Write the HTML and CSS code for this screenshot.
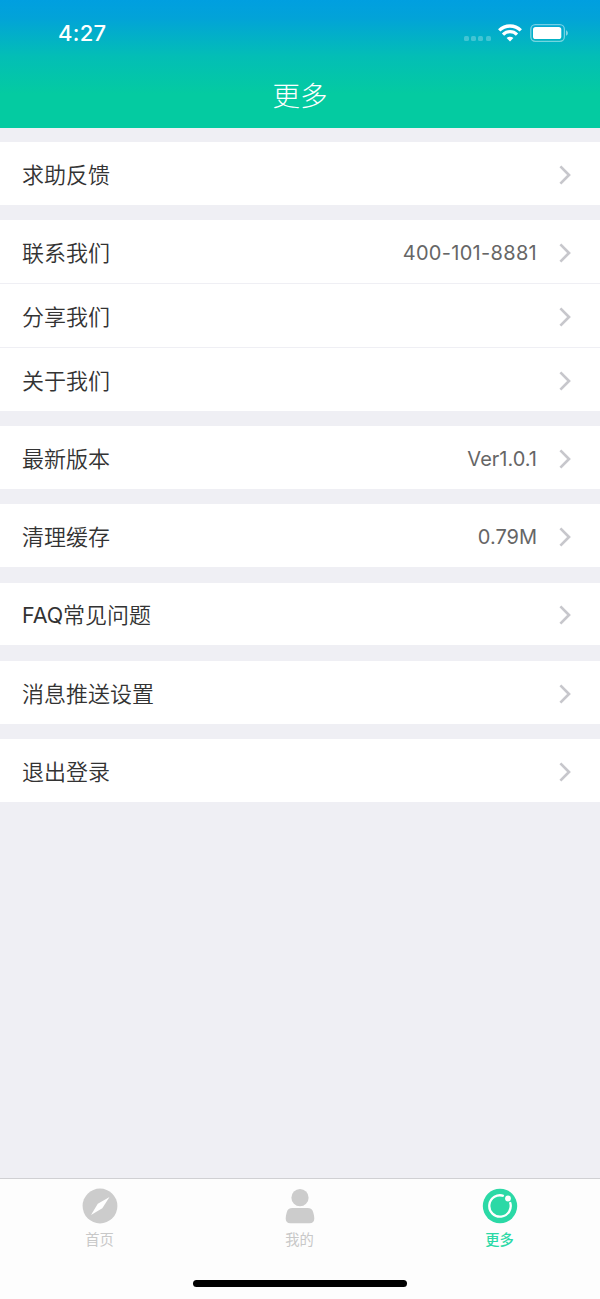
FILE: index.html
```html
<!DOCTYPE html>
<html lang="zh-CN">
<head>
<meta charset="utf-8">
<title>更多</title>
<link rel="stylesheet" href="styles.css">
</head>
<body>
<svg class="sprite" aria-hidden="true">
  <symbol id="chevron" viewBox="0 0 12 20"><path d="M1.4 1.4 10 10l-8.6 8.6" fill="none" stroke="#c7c7cc" stroke-width="2.7"/></symbol>
</svg>
<header class="header">
  <div class="status">
    <span class="time">4:27</span>
    <span class="signal"><i></i><i></i><i></i><i></i></span>
    <svg class="wifi" width="24" height="18" viewBox="0 0 24 18" fill="none" stroke="#fff">
      <path d="M1.2 6.4C7.2.5 16.8.5 22.8 6.4" stroke-width="3.3"/>
      <path d="M5 10.6c3.9-3.9 10.1-3.9 14 0" stroke-width="3.2"/>
      <path d="M8.6 14c1.9-1.7 4.9-1.7 6.8 0L12 17.5Z" fill="#fff" stroke="none"/>
    </svg>
    <svg class="battery" width="39" height="18" viewBox="0 0 39 18">
      <rect x=".8" y=".7" width="33.6" height="16.6" rx="4.5" fill="none" stroke="#fff" stroke-opacity=".45" stroke-width="1.3"/>
      <rect x="3" y="3" width="28.3" height="12" rx="2.6" fill="#fff"/>
      <path d="M36 6.2c2.5 1 2.5 4.6 0 5.6Z" fill="#fff" fill-opacity=".5"/>
    </svg>
  </div>
  <h1 class="title">更多</h1>
</header>
<main class="list">
  <section class="group">
    <div class="row"><span class="label">求助反馈</span><svg class="chevron"><use href="#chevron"/></svg></div>
  </section>
  <section class="group">
    <div class="row"><span class="label">联系我们</span><span class="value phone">400-101-8881</span><svg class="chevron"><use href="#chevron"/></svg></div>
    <div class="row"><span class="label">分享我们</span><svg class="chevron"><use href="#chevron"/></svg></div>
    <div class="row"><span class="label">关于我们</span><svg class="chevron"><use href="#chevron"/></svg></div>
  </section>
  <section class="group">
    <div class="row"><span class="label">最新版本</span><span class="value">Ver1.0.1</span><svg class="chevron"><use href="#chevron"/></svg></div>
  </section>
  <section class="group">
    <div class="row"><span class="label">清理缓存</span><span class="value">0.79M</span><svg class="chevron"><use href="#chevron"/></svg></div>
  </section>
  <section class="group">
    <div class="row"><span class="label"><span class="latin">FAQ</span>常见问题</span><svg class="chevron"><use href="#chevron"/></svg></div>
  </section>
  <section class="group">
    <div class="row"><span class="label">消息推送设置</span><svg class="chevron"><use href="#chevron"/></svg></div>
  </section>
  <section class="group">
    <div class="row"><span class="label">退出登录</span><svg class="chevron"><use href="#chevron"/></svg></div>
  </section>
</main>
<footer class="footer">
  <nav class="tabs">
    <a class="tab">
      <svg width="36" height="36" viewBox="0 0 36 36"><circle cx="18" cy="18" r="17.4" fill="#ccc"/><path d="M27.5 9 20.3 20.2 9 27 15.8 15.7Z" fill="#fff"/></svg>
      <span>首页</span>
    </a>
    <a class="tab">
      <svg width="36" height="36" viewBox="0 0 36 36" fill="#ccc"><circle cx="18" cy="9.7" r="8.6"/><path d="M10.5 20h15c3.2 0 4.9 1.4 5.7 4.2.7 2.3 1.1 4.3 1.1 6.3 0 3.2-1.6 4.8-4.6 4.8H8.3c-3 0-4.6-1.6-4.6-4.8 0-2 .4-4 1.1-6.3.8-2.8 2.500-4.200 5.700-4.200Z"/></svg>
      <span>我的</span>
    </a>
    <a class="tab active">
      <svg width="36" height="36" viewBox="0 0 36 36"><circle cx="18" cy="18" r="17.2" fill="#2bd9a6"/><path d="M21.8 8A10.700 10.700 0 1 0 28 14.200" fill="none" stroke="#fff" stroke-width="2.3"/><circle cx="26" cy="10.500" r="2.900" fill="#fff"/></svg>
      <span>更多</span>
    </a>
  </nav>
  <div class="home-indicator"></div>
</footer>
</body>
</html>
```
FILE: styles.css
```css
* { box-sizing: border-box; }
body {
  margin: 0;
  height: 1299px;
  display: flex;
  flex-direction: column;
  background: #efeff4;
  font-family: Inter, "Noto Sans CJK SC", sans-serif;
}
.sprite { display: none; }
.header {
  height: 127.6px;
  background: linear-gradient(#009fe0 0, #02a3d8 18px, #03beb6 56px, #04cba1 94px, #04cba1 100%);
}
.status {
  height: 64px;
  display: flex;
  align-items: center;
  padding: 2px 31px 0 58px;
  color: #fff;
}
.time { flex: 1; font-size: 22px; font-weight: 550; letter-spacing: .3px; }
.signal { display: flex; gap: 2.2px; margin: 11px 7.5px 0 0; }
.signal i { width: 5px; height: 5px; border-radius: 1.6px; background: #fff; opacity: .25; }
.wifi { margin-right: 8px; }
.title {
  margin: 12px 0 0;
  color: #fff;
  font-size: 27.5px;
  font-weight: 300;
  line-height: 40px;
  text-align: center;
}
.list {
  flex: 1;
  display: flex;
  flex-direction: column;
  gap: 15.65px;
  padding-top: 14.6px;
}
.group { display: flex; flex-direction: column; gap: 1.2px; }
.row {
  height: 62.6px;
  display: flex;
  align-items: center;
  padding: 2px 29px 0 22px;
  background: #fff;
}
.label { flex: 1; padding-top: 1px; color: #333; font-size: 22px; line-height: 32px; font-weight: 350; }
.latin { font-size: 21.5px; font-weight: 400; letter-spacing: -.1px; }
.value { margin-right: 22px; color: #666; font-size: 20px; }
.phone { letter-spacing: .3px; }
.chevron { width: 12px; height: 20px; margin-top: 1px; }
.footer {
  height: 121.5px;
  display: flex;
  flex-direction: column;
  align-items: center;
  justify-content: space-between;
  padding-bottom: 12px;
  border-top: 1px solid #d0d0d3;
  background: #fdfdfd;
}
.tabs { width: 100%; display: grid; grid-template-columns: repeat(3, 1fr); }
.tab {
  display: flex;
  flex-direction: column;
  align-items: center;
  padding-top: 9.5px;
  color: #c8c8c8;
  font-size: 14.3px;
  line-height: 20px;
}
.tab span { margin: 6px 1px 0 0; }
.active { color: #2bd9a6; font-weight: 500; }
.home-indicator { width: 214px; height: 7.5px; border-radius: 4px; background: #000; }
```
